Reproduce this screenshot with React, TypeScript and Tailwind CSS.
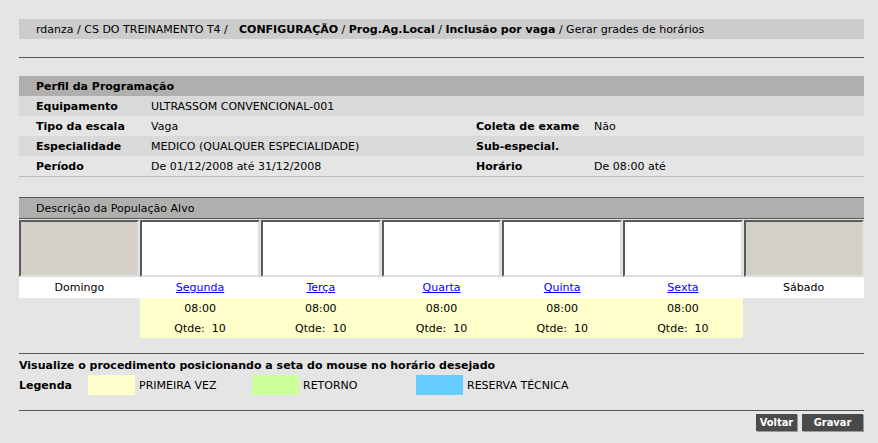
import React from "react";

const font = { fontFamily: '"DejaVu Sans", Verdana, sans-serif' };

type Day = { name: string; link: boolean; slot: boolean };

const days: Day[] = [
  { name: "Domingo", link: false, slot: false },
  { name: "Segunda", link: true, slot: true },
  { name: "Terça", link: true, slot: true },
  { name: "Quarta", link: true, slot: true },
  { name: "Quinta", link: true, slot: true },
  { name: "Sexta", link: true, slot: true },
  { name: "Sábado", link: false, slot: false },
];

function InfoRow({
  label,
  value,
  label2,
  value2,
  dark,
}: {
  label: string;
  value: string;
  label2?: string;
  value2?: string;
  dark?: boolean;
}) {
  return (
    <div
      className={`grid h-[20px] grid-cols-[132px_325px_118px_1fr] items-center ${
        dark ? "bg-[#d9d9d9]" : "bg-[#e5e5e5]"
      }`}
    >
      <span className="pl-[17px] font-bold">{label}</span>
      <span>{value}</span>
      <span className="font-bold">{label2}</span>
      <span>{value2}</span>
    </div>
  );
}

export default function App() {
  return (
    <div
      className="h-[443px] w-[878px] overflow-hidden bg-[#e5e5e5] text-[11px] leading-none text-black"
      style={font}
    >
      <div className="ml-[19px] w-[845px] pt-[19px]">
        {/* breadcrumb */}
        <div className="flex h-[20px] items-center bg-[#cccccc] pl-[17px] whitespace-pre">
          <span>rdanza / CS DO TREINAMENTO T4 / </span>
          <span className="font-bold">  CONFIGURAÇÃO</span>
          <span> / </span>
          <span className="font-bold">Prog.Ag.Local</span>
          <span> / </span>
          <span className="font-bold">Inclusão por vaga</span>
          <span> / Gerar grades de horários</span>
        </div>

        <div className="mt-[18px] h-px bg-[#555555]" />

        {/* perfil */}
        <div className="mt-[18px]">
          <div className="flex h-[20px] items-center bg-[#b0afad] pl-[17px] font-bold">
            Perfil da Programação
          </div>
          <InfoRow label="Equipamento" value="ULTRASSOM CONVENCIONAL-001" dark />
          <InfoRow label="Tipo da escala" value="Vaga" label2="Coleta de exame" value2="Não" />
          <InfoRow label="Especialidade" value="MEDICO (QUALQUER ESPECIALIDADE)" label2="Sub-especial." dark />
          <InfoRow label="Período" value="De 01/12/2008 até 31/12/2008" label2="Horário" value2="De 08:00 até" />
          <div className="h-px bg-[#bbbbbb]" />
        </div>

        {/* população alvo */}
        <div className="mt-[20px]">
          <div className="flex h-[22px] items-center border-y border-[#555555] bg-[#b0afad] pl-[17px]">
            Descrição da População Alvo
          </div>
          <div className="grid grid-cols-7 gap-x-px bg-[#e5e5e5] pt-px">
            {days.map((d) => (
              <div
                key={d.name}
                className={`h-[57px] border-2 border-t-[#5a5a5a] border-l-[#5a5a5a] border-r-[#dedede] border-b-[#dedede] ${
                  d.slot ? "bg-white" : "bg-[#d4d0c8]"
                }`}
              />
            ))}
          </div>
          <div className="grid grid-cols-7 bg-white">
            {days.map((d) => (
              <div key={d.name} className="flex h-[21px] items-center justify-center">
                {d.link ? (
                  <a href="#" className="text-[#0000ff] underline">
                    {d.name}
                  </a>
                ) : (
                  <span>{d.name}</span>
                )}
              </div>
            ))}
          </div>
          <div className="grid grid-cols-7">
            {days.map((d) => (
              <div key={d.name} className={d.slot ? "bg-[#ffffcc]" : ""}>
                {d.slot && (
                  <>
                    <div className="flex h-[20px] items-center justify-center">08:00</div>
                    <div className="flex h-[20px] items-center justify-center whitespace-pre">
                      Qtde:  10
                    </div>
                  </>
                )}
              </div>
            ))}
          </div>
        </div>

        {/* legenda */}
        <div className="mt-[15px] h-px bg-[#555555]" />
        <div className="flex h-[21px] items-center pt-px font-bold">
          Visualize o procedimento posicionando a seta do mouse no horário desejado
        </div>
        <div className="flex h-[20px] items-center">
          <span className="w-[69px] font-bold">Legenda</span>
          <span className="h-[20px] w-[47px] bg-[#ffffcc]" />
          <span className="ml-[4px] w-[113px]">PRIMEIRA VEZ</span>
          <span className="h-[20px] w-[47px] bg-[#ccff99]" />
          <span className="ml-[4px] w-[113px]">RETORNO</span>
          <span className="h-[20px] w-[47px] bg-[#66ccff]" />
          <span className="ml-[4px]">RESERVA TÉCNICA</span>
        </div>
        <div className="mt-[15px] h-px bg-[#555555]" />

        {/* botões */}
        <div
          className="mt-[3px] flex justify-end gap-[5px] pr-px"
          style={{ fontFamily: '"DejaVu Sans Condensed", "Liberation Sans", sans-serif' }}
        >
          <button className="h-[17px] w-[41px] bg-[#4a4a4a] font-bold text-white shadow-[1px_1px_0_#9a9a9a]">
            Voltar
          </button>
          <button className="h-[17px] w-[61px] bg-[#4a4a4a] font-bold text-white shadow-[1px_1px_0_#9a9a9a]">
            Gravar
          </button>
        </div>
      </div>
    </div>
  );
}
